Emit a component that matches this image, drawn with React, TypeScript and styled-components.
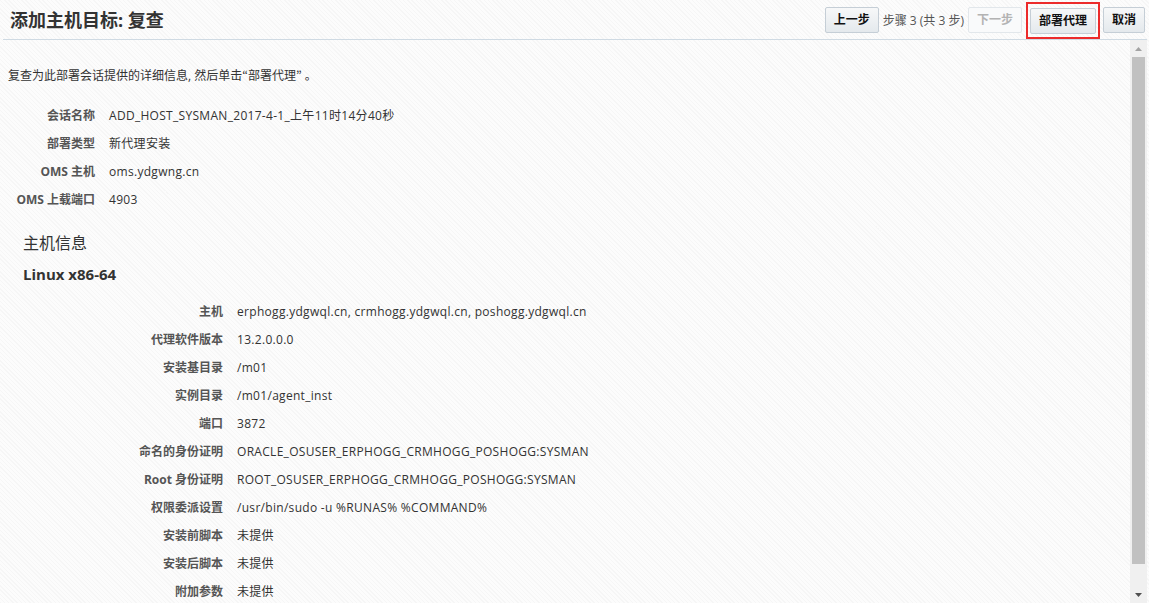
import React from "react";
import styled, { createGlobalStyle } from "styled-components";

const GlobalStyle = createGlobalStyle`
  html, body { margin: 0; padding: 0; height: 100%; }
  body {
    font-family: "Open Sans", "Noto Sans CJK SC", sans-serif;
    font-size: 12px;
    color: #333;
    background-color: #fafafa;
    background-image: repeating-linear-gradient(45deg, #f6f6f6 0 1px, #fcfcfc 1px 3px);
    overflow: hidden;
  }
  #root { height: 100%; }
`;

const Page = styled.div`
  height: 603px;
  display: flex;
  flex-direction: column;
  padding: 0 2px 0 3px;
  box-sizing: border-box;
`;

const Header = styled.header`
  height: 39px;
  flex: none;
  display: flex;
  align-items: center;
  border-bottom: 1px solid #cfdae3;
  padding: 0 2px 0 7px;
`;

const Title = styled.h1`
  margin: 0;
  font-size: 18px;
  font-weight: bold;
  color: #333;
  flex: 1;
  position: relative;
  top: -1px;
`;

const Toolbar = styled.div`
  display: flex;
  align-items: center;
  height: 100%;
`;

const Button = styled.button<{ $disabled?: boolean }>`
  height: 26px;
  padding: 0 8px;
  font-family: "Open Sans", "Noto Sans CJK SC", sans-serif;
  font-size: 12px;
  font-weight: bold;
  color: ${(p) => (p.$disabled ? "#b3b3b3" : "#111")};
  border: 1px solid ${(p) => (p.$disabled ? "#e2e7eb" : "#c5ced6")};
  border-radius: 2px;
  background: ${(p) =>
    p.$disabled ? "#f9fafb" : "linear-gradient(#f7f8f9, #e4e9ed)"};
  cursor: pointer;
  line-height: 24px;
`;

const StepText = styled.span`
  color: #555;
  margin: 0 4px 0 4px;
  font-size: 12px;
`;

const Highlight = styled.div`
  height: 37px;
  box-sizing: border-box;
  border: 2px solid #ec2b2b;
  display: flex;
  align-items: center;
  padding: 0 2px;
  margin: 0 3px 0 4px;
  position: relative;
  top: 1px;
`;

const Body = styled.div`
  flex: 1;
  display: flex;
  min-height: 0;
`;

const Content = styled.main`
  flex: 1;
  overflow: hidden;
  padding: 27px 5px 0 5px;
`;

const ScrollBar = styled.div`
  width: 17px;
  flex: none;
  background: #f0f0f0;
  display: flex;
  flex-direction: column;
`;

const ScrollArrow = styled.div`
  height: 17px;
  flex: none;
  display: flex;
  align-items: center;
  justify-content: center;
`;

const ScrollTrack = styled.div`
  flex: 1;
  padding: 0 2px;
`;

const ScrollThumb = styled.div`
  background: #c1c1c1;
  width: 100%;
`;

const Intro = styled.p`
  margin: 0 0 17px 0;
  line-height: 16px;
  color: #333;
`;

const Quote = styled.span`
  font-family: "Noto Sans CJK JP", sans-serif;
`;

const InfoGrid = styled.div<{ $labelWidth: number }>`
  display: grid;
  grid-template-columns: ${(p) => p.$labelWidth}px 1fr;
  grid-auto-rows: 28px;
  column-gap: 14px;
  align-items: center;
`;

const Label = styled.div`
  text-align: right;
  font-weight: bold;
  color: #555;
  white-space: nowrap;
`;

const Value = styled.div`
  color: #333;
  white-space: nowrap;
  letter-spacing: 0.3px;
`;

const SectionTitle = styled.h2`
  margin: 19px 0 0 15px;
  font-size: 16px;
  font-weight: normal;
  color: #333;
  line-height: 22px;
`;

const SubTitle = styled.h3`
  margin: 10px 0 13px 15px;
  font-size: 15px;
  font-weight: bold;
  color: #333;
  line-height: 20px;
`;

const sessionRows: [string, string][] = [
  ["会话名称", "ADD_HOST_SYSMAN_2017-4-1_上午11时14分40秒"],
  ["部署类型", "新代理安装"],
  ["OMS 主机", "oms.ydgwng.cn"],
  ["OMS 上载端口", "4903"],
];

const hostRows: [string, string][] = [
  ["主机", "erphogg.ydgwql.cn, crmhogg.ydgwql.cn, poshogg.ydgwql.cn"],
  ["代理软件版本", "13.2.0.0.0"],
  ["安装基目录", "/m01"],
  ["实例目录", "/m01/agent_inst"],
  ["端口", "3872"],
  ["命名的身份证明", "ORACLE_OSUSER_ERPHOGG_CRMHOGG_POSHOGG:SYSMAN"],
  ["Root 身份证明", "ROOT_OSUSER_ERPHOGG_CRMHOGG_POSHOGG:SYSMAN"],
  ["权限委派设置", "/usr/bin/sudo -u %RUNAS% %COMMAND%"],
  ["安装前脚本", "未提供"],
  ["安装后脚本", "未提供"],
  ["附加参数", "未提供"],
];

export default function App() {
  return (
    <>
      <GlobalStyle />
      <Page>
        <Header>
          <Title>添加主机目标: 复查</Title>
          <Toolbar>
            <Button>上一步</Button>
            <StepText>步骤 3 (共 3 步)</StepText>
            <Button $disabled>下一步</Button>
            <Highlight>
              <Button>部署代理</Button>
            </Highlight>
            <Button>取消</Button>
          </Toolbar>
        </Header>
        <Body>
          <Content>
            <Intro>
              复查为此部署会话提供的详细信息, 然后单击<Quote>“</Quote>部署代理<Quote>”</Quote> 。
            </Intro>
            <InfoGrid $labelWidth={87}>
              {sessionRows.map(([l, v]) => (
                <React.Fragment key={l}>
                  <Label>{l}</Label>
                  <Value>{v}</Value>
                </React.Fragment>
              ))}
            </InfoGrid>
            <SectionTitle>主机信息</SectionTitle>
            <SubTitle>Linux x86-64</SubTitle>
            <InfoGrid $labelWidth={215}>
              {hostRows.map(([l, v]) => (
                <React.Fragment key={l}>
                  <Label>{l}</Label>
                  <Value>{v}</Value>
                </React.Fragment>
              ))}
            </InfoGrid>
          </Content>
          <ScrollBar>
            <ScrollArrow>
              <svg width="7" height="4" viewBox="0 0 7 4">
                <polygon points="3.5,0 7,4 0,4" fill="#a3a3a3" />
              </svg>
            </ScrollArrow>
            <ScrollTrack>
              <ScrollThumb style={{ height: 507 }} />
            </ScrollTrack>
            <ScrollArrow>
              <svg width="7" height="4" viewBox="0 0 7 4">
                <polygon points="0,0 7,0 3.5,4" fill="#505050" />
              </svg>
            </ScrollArrow>
          </ScrollBar>
        </Body>
      </Page>
    </>
  );
}
